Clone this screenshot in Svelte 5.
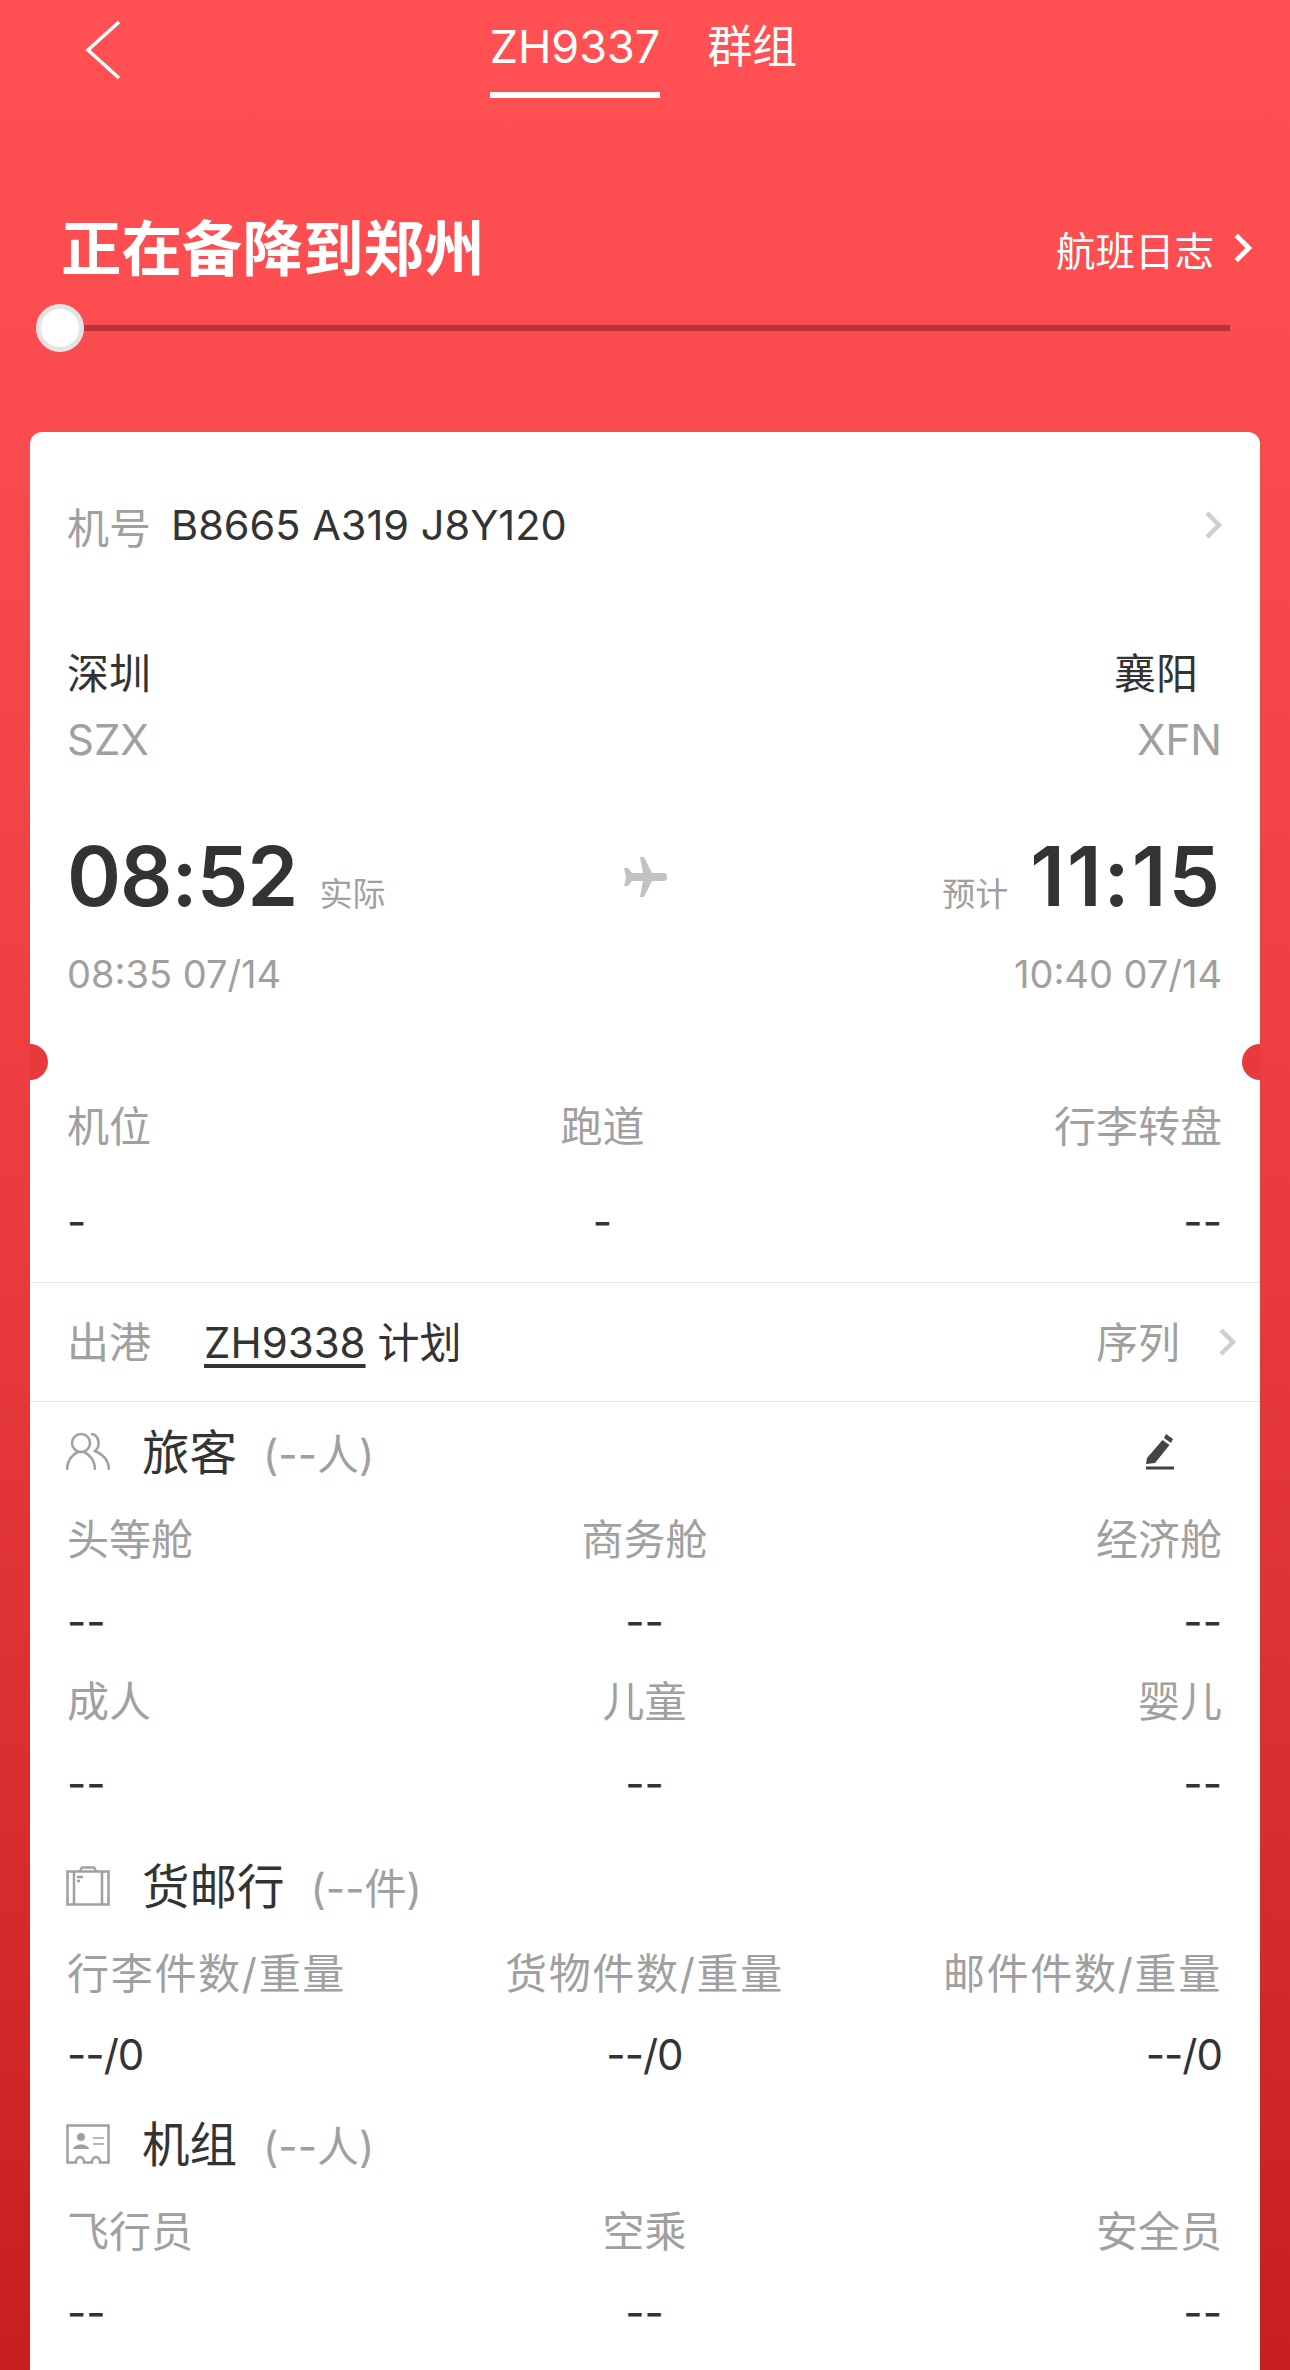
<script>
  const passengers = [
    [
      { label: "头等舱", value: "--" },
      { label: "商务舱", value: "--" },
      { label: "经济舱", value: "--" }
    ],
    [
      { label: "成人", value: "--" },
      { label: "儿童", value: "--" },
      { label: "婴儿", value: "--" }
    ]
  ];
  const cargo = [
    { label: "行李件数/重量", value: "--/0" },
    { label: "货物件数/重量", value: "--/0" },
    { label: "邮件件数/重量", value: "--/0" }
  ];
  const crew = [
    { label: "飞行员", value: "--" },
    { label: "空乘", value: "--" },
    { label: "安全员", value: "--" }
  ];
  const stand = [
    { label: "机位", value: "-" },
    { label: "跑道", value: "-" },
    { label: "行李转盘", value: "--" }
  ];
</script>

{#snippet stats(items)}
  <div class="stat-row">
    {#each items as item}
      <div class="stat">
        <div class="stat-label">{item.label}</div>
        <div class="stat-value">{item.value}</div>
      </div>
    {/each}
  </div>
{/snippet}

{#snippet chevron(cls)}
  <svg class={cls} viewBox="0 0 18 30" fill="none" stroke="currentColor" stroke-width="4.5">
    <path d="M3 3 L15 15 L3 27" />
  </svg>
{/snippet}

<div class="page">
  <header class="topbar">
    <svg class="back" viewBox="0 0 36 60" fill="none" stroke="#fff" stroke-width="3.5">
      <path d="M34 2 L3 30 L34 58" />
    </svg>
    <div class="tabs">
      <span class="tab is-active">ZH9337</span>
      <span class="tab">群组</span>
    </div>
  </header>

  <section class="status">
    <h1>正在备降到郑州</h1>
    <div class="log-link">
      <span>航班日志</span>
      {@render chevron("log-chevron")}
    </div>
  </section>

  <div class="progress">
    <span class="knob"></span>
  </div>

  <main class="card">
    <span class="notch notch-left"></span>
    <span class="notch notch-right"></span>

    <div class="plane-row">
      <span class="muted">机号</span>
      <span class="plane-info">B8665 A319 J8Y120</span>
      {@render chevron("row-chevron")}
    </div>

    <div class="route">
      <div class="city-row"><span>深圳</span><span class="city-end">襄阳</span></div>
      <div class="code-row"><span>SZX</span><span>XFN</span></div>

      <div class="time-row">
        <div class="time-side">
          <strong>08:52</strong>
          <span class="time-tag">实际</span>
        </div>
        <svg class="plane" viewBox="0 0 44 40" fill="#c2c2c2">
          <path d="M17 0 L21 0 L29 16 L41 16 Q44 16 44 20 Q44 24 41 24 L29 24 L21 40 L17 40 L20 24 L9 24 L5 29 L1 29 L3 20 L1 11 L5 11 L9 16 L20 16 Z" />
        </svg>
        <div class="time-side time-end">
          <span class="time-tag">预计</span>
          <strong>11:15</strong>
        </div>
      </div>

      <div class="plan-row"><span>08:35 07/14</span><span>10:40 07/14</span></div>
    </div>

    <div class="stand">
      {@render stats(stand)}
    </div>

    <div class="outbound">
      <span class="muted">出港</span>
      <span class="outbound-flight"><u>ZH9338</u> 计划</span>
      <span class="muted seq">序列</span>
      {@render chevron("seq-chevron")}
    </div>

    <section class="group passengers">
      <div class="group-head">
        <svg class="group-icon" viewBox="0 0 44 40" fill="none" stroke="#a0a0a0" stroke-width="2.5">
          <circle cx="15" cy="11" r="9" />
          <path d="M1 38 C1 28 7 22 12 20 M18 20 C23 22 29 28 29 38" />
          <path d="M25 2 C33 2 35 14 29 19 C36 22 43 28 43 38" />
        </svg>
        <span class="group-title">旅客</span>
        <span class="group-count">(--人)</span>
        <svg class="edit" viewBox="0 0 28 36" fill="#444">
          <path d="M20 0 L27 5 L25 9 L18 4 Z M16.500 6 L23.500 11 L9 29 L0 30 L1 24 Z" />
          <rect x="0" y="32.500" width="28" height="3" />
        </svg>
      </div>
      <div class="stack">
        {#each passengers as row}
          {@render stats(row)}
        {/each}
      </div>
    </section>

    <section class="group luggage">
      <div class="group-head">
        <svg class="group-icon" viewBox="0 0 44 40" fill="none" stroke="#a0a0a0" stroke-width="2.5">
          <rect x="1.500" y="5.500" width="41" height="33" />
          <path d="M14 5 L16 1.500 L28 1.500 L30 5" />
          <path d="M8 5 V38 M36 5 V38 M11 11 H17 M11 15 H14" />
        </svg>
        <span class="group-title">货邮行</span>
        <span class="group-count">(--件)</span>
      </div>
      {@render stats(cargo)}
    </section>

    <section class="group crew">
      <div class="group-head">
        <svg class="group-icon" viewBox="0 0 44 40" fill="none" stroke="#a0a0a0" stroke-width="2.5">
          <path d="M1.500 1.500 H42.500 V38.500 H34 C34 31 26 31 26 38.500 H18 C18 31 10 31 10 38.500 H1.500 Z" />
          <circle cx="15" cy="13" r="4" fill="#a0a0a0" stroke="none" />
          <path d="M7 25 C8 19 22 19 23 25 Z" fill="#a0a0a0" stroke="none" />
          <path d="M27 14 H38 M27 20 H38" stroke-width="1.500" />
        </svg>
        <span class="group-title">机组</span>
        <span class="group-count">(--人)</span>
      </div>
      {@render stats(crew)}
    </section>
  </main>
</div>

<style>
  :global(body) {
    margin: 0;
  }

  .page {
    height: 2370px;
    overflow: hidden;
    box-sizing: border-box;
    background: linear-gradient(180deg, #ff5053 0%, #fa4b4e 18%, #e83a3c 55%, #c81e20 100%);
    font-family: Inter, "Noto Sans CJK SC", sans-serif;
    color: #333;
  }

  .topbar {
    position: relative;
    display: flex;
    justify-content: center;
    height: 97px;
  }

  .back {
    position: absolute;
    left: 85px;
    top: 20px;
    width: 36px;
    height: 60px;
  }

  .tabs {
    display: flex;
    gap: 47px;
    margin-right: 3px;
    color: #fff;
  }

  .tab {
    box-sizing: border-box;
    height: 98px;
    padding-top: 20px;
    font-size: 45px;
    line-height: 54px;
  }

  .tab.is-active {
    border-bottom: 6px solid #fff;
  }

  .status {
    display: flex;
    justify-content: space-between;
    align-items: center;
    height: 100px;
    margin-top: 101px;
    padding: 0 38px 0 61px;
    color: #fff;
  }

  h1 {
    margin: 0;
    padding-top: 3px;
    font-size: 60.500px;
    font-weight: 700;
    line-height: 97px;
  }

  .log-link {
    display: flex;
    align-items: center;
    gap: 19px;
    font-size: 39.500px;
  }

  :global(.log-chevron) {
    width: 19px;
    height: 32px;
  }

  .progress {
    position: relative;
    height: 6px;
    margin: 27px 60px 0;
    width: 1170px;
    background: #b93237;
  }

  .knob {
    position: absolute;
    left: -24px;
    top: -21px;
    box-sizing: border-box;
    width: 48px;
    height: 48px;
    border-radius: 50%;
    border: 5px solid #e4e4e4;
    background: #fff;
  }

  .card {
    position: relative;
    margin: 101px 30px 0;
    height: 1960px;
    padding-top: 1px;
    box-sizing: border-box;
    border-radius: 12px 12px 0 0;
    background: #fff;
    overflow: hidden;
    font-size: 42px;
  }

  .notch {
    position: absolute;
    top: 612px;
    width: 36px;
    height: 36px;
    border-radius: 50%;
    background: #e83a3c;
  }

  .notch-left {
    left: -18px;
  }

  .notch-right {
    right: -18px;
  }

  .muted {
    color: #a0a0a0;
  }

  .plane-row {
    display: flex;
    align-items: center;
    height: 184px;
    padding: 0 38px 0 37px;
  }

  .plane-info {
    margin-left: 20px;
    font-size: 41.500px;
  }

  :global(.row-chevron),
  :global(.seq-chevron) {
    width: 18px;
    height: 30px;
    color: #cfcfcf;
  }

  :global(.row-chevron) {
    margin-left: auto;
  }

  .route {
    margin-top: 18px;
    padding: 0 38px 0 37px;
  }

  .city-row,
  .code-row,
  .plan-row {
    display: flex;
    justify-content: space-between;
    align-items: center;
  }

  .city-row {
    height: 70px;
  }

  .city-end {
    margin-right: 24px;
  }

  .code-row {
    height: 60px;
    margin-top: 4px;
    color: #a0a0a0;
  }

  .time-row {
    display: grid;
    grid-template-columns: 1fr auto 1fr;
    align-items: center;
    height: 100px;
    margin-top: 58px;
  }

  .time-side {
    display: flex;
    align-items: baseline;
    gap: 22px;
  }

  .time-end {
    justify-content: flex-end;
  }

  .time-side strong {
    font-size: 82px;
    font-weight: 600;
    line-height: 100px;
    letter-spacing: -1px;
  }

  .time-end strong {
    letter-spacing: 2px;
  }

  .time-tag {
    font-size: 33px;
    color: #a0a0a0;
  }

  .plane {
    width: 44px;
    height: 40px;
  }

  .plan-row {
    height: 60px;
    margin-top: 17px;
    font-size: 38px;
    color: #a0a0a0;
  }

  .stand {
    margin-top: 98px;
    height: 180px;
    border-bottom: 1px solid #e6e6e6;
  }

  .stand .stat-value {
    margin-top: 45px;
  }

  .stat-row {
    display: flex;
    justify-content: space-between;
    padding: 0 38px 0 37px;
  }

  .stat {
    display: flex;
    flex-direction: column;
    align-items: center;
  }

  .stat:first-child {
    align-items: flex-start;
  }

  .stat:last-child {
    align-items: flex-end;
  }

  .stat-label {
    height: 50px;
    line-height: 50px;
    color: #a0a0a0;
  }

  .stat-value {
    height: 50px;
    margin-top: 32px;
    line-height: 50px;
  }

  .luggage .stat-value,
  .crew .stat-value {
    margin-top: 31px;
  }

  .luggage .stat-label {
    letter-spacing: 1.700px;
  }

  .luggage .stat-value {
    letter-spacing: -1px;
  }

  .outbound {
    display: flex;
    align-items: center;
    height: 118px;
    padding: 0 24px 0 37px;
    border-bottom: 1px solid #e6e6e6;
  }

  .outbound .muted,
  .outbound-flight {
    position: relative;
    top: -3px;
  }

  .outbound-flight {
    margin-left: 53px;
  }

  .outbound-flight u {
    text-underline-offset: 6px;
  }

  .seq {
    margin-left: auto;
    margin-right: 38px;
  }

  .group-head {
    display: flex;
    align-items: center;
    height: 60px;
    margin-top: -3px;
    margin-bottom: 36px;
    padding-left: 36px;
  }

  .group-icon {
    width: 44px;
    height: 40px;
    margin-top: 5px;
    margin-right: 32px;
  }

  .group-title {
    font-size: 47.500px;
  }

  .group-count {
    position: relative;
    top: 2px;
    margin-left: 26px;
    font-size: 42px;
    color: #a0a0a0;
  }

  .edit {
    width: 28px;
    height: 36px;
    margin-top: 6px;
    margin-left: auto;
    margin-right: 86px;
  }

  .passengers {
    margin-top: 20px;
    margin-bottom: 47px;
  }

  .luggage {
    margin-bottom: 34px;
  }

  .stack {
    display: flex;
    flex-direction: column;
    gap: 30px;
  }
</style>
